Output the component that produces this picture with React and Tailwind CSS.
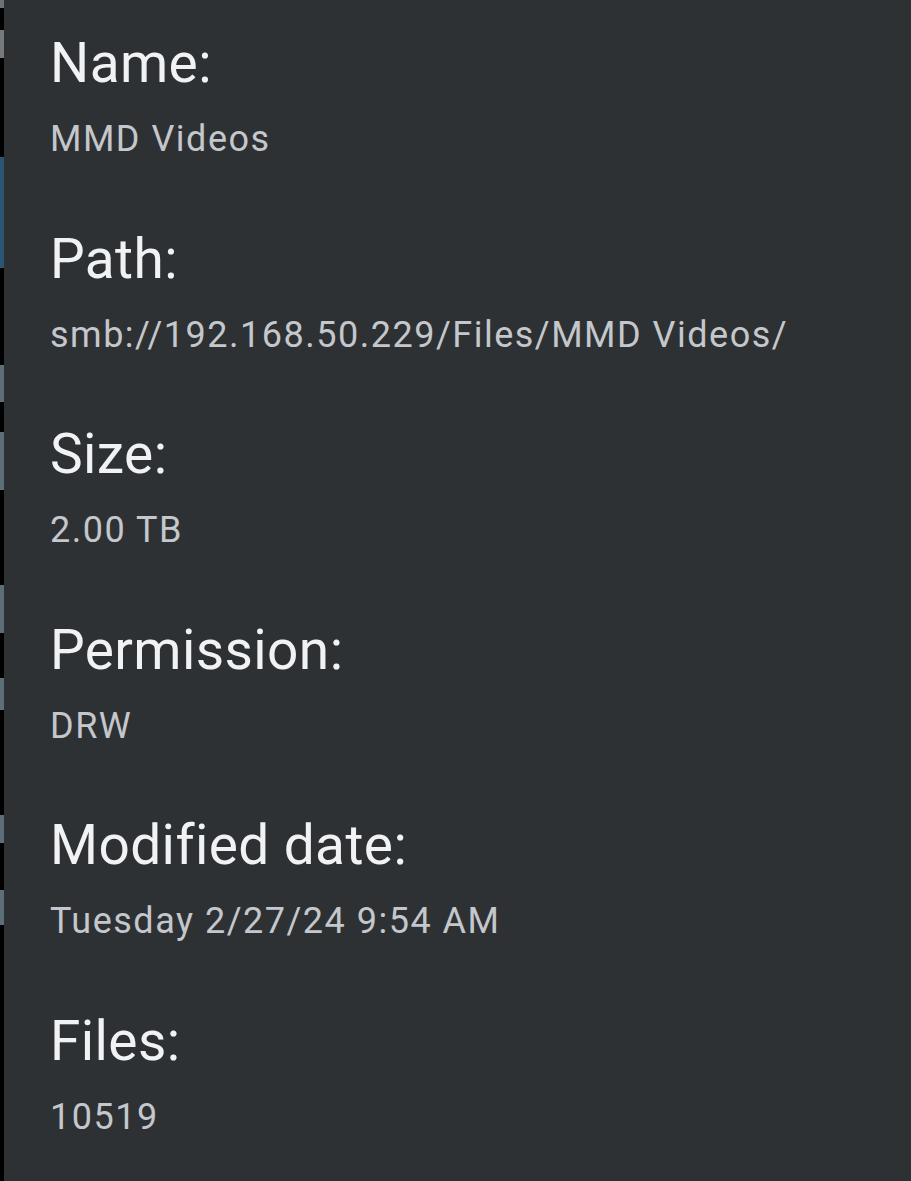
const rows = [
  ['Name:', 'MMD Videos'],
  ['Path:', 'smb://192.168.50.229/Files/MMD Videos/'],
  ['Size:', '2.00 TB'],
  ['Permission:', 'DRW'],
  ['Modified date:', 'Tuesday 2/27/24 9:54 AM'],
  ['Files:', '10519'],
];

// bits of the screen behind the sheet that peek out on the left edge
const edge = [
  ['h-[8px]', 'bg-[#6f7275]'],
  ['h-[22px]', 'bg-black'],
  ['h-[28px]', 'bg-[#77797b]'],
  ['h-[99px]', 'bg-black'],
  ['h-[111px]', 'bg-[#2a5673]'],
  ['h-[97px]', 'bg-black'],
  ['h-[37px]', 'bg-[#5d6e78]'],
  ['h-[30px]', 'bg-black'],
  ['h-[58px]', 'bg-[#5d6e78]'],
  ['h-[95px]', 'bg-black'],
  ['h-[48px]', 'bg-[#5d6e78]'],
  ['h-[45px]', 'bg-black'],
  ['h-[32px]', 'bg-[#5d6e78]'],
  ['h-[105px]', 'bg-black'],
  ['h-[28px]', 'bg-[#5d6e78]'],
  ['h-[47px]', 'bg-black'],
  ['h-[35px]', 'bg-[#5d6e78]'],
  ['h-[256px]', 'bg-black'],
];

export default function App() {
  return (
    <div className="flex h-[1181px] w-[911px] overflow-hidden bg-black font-['Roboto','Liberation_Sans',sans-serif]">
      <div className="flex w-[4px] shrink-0 flex-col">
        {edge.map(([h, bg], i) => (
          <div key={i} className={`${h} ${bg} shrink-0`} />
        ))}
      </div>
      <div className="flex-1 bg-[#2e3134] pl-[46px] pt-[31px]">
        {rows.map(([label, value]) => (
          <div key={label} className="h-[195.5px]">
            <p className="text-[55px] leading-[64px] tracking-[0.4px] text-[#f1f2f4]">{label}</p>
            <p className="mt-[23px] text-[36px] leading-[42px] tracking-[1.5px] text-[#c4c7cb]">{value}</p>
          </div>
        ))}
      </div>
    </div>
  );
}
